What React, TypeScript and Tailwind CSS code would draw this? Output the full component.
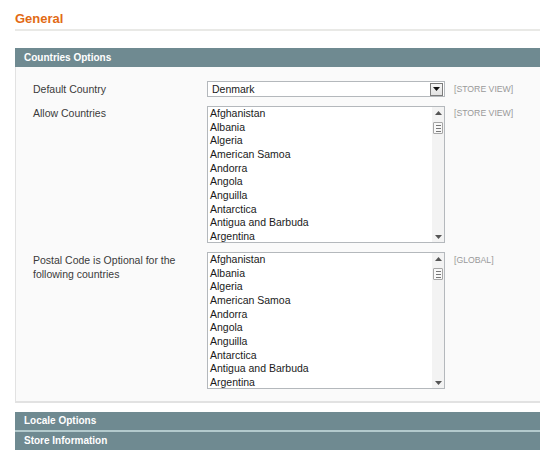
import React from 'react';

const countries = [
  'Afghanistan',
  'Albania',
  'Algeria',
  'American Samoa',
  'Andorra',
  'Angola',
  'Anguilla',
  'Antarctica',
  'Antigua and Barbuda',
  'Argentina',
];

function CountryList() {
  return (
    <div className="flex h-[137px] w-[238px] border border-[#b4b8bc] bg-white">
      <div className="flex-1 overflow-hidden pl-[2px]">
        {countries.map((c) => (
          <div key={c} className="h-[13.67px] text-[10.5px] leading-[13.67px] text-[#1a1a1a] whitespace-nowrap">
            {c}
          </div>
        ))}
      </div>
      {/* Scrollbar */}
      <div className="flex w-[12px] flex-col items-center bg-[#f3f3f3]">
        <div className="flex h-[11px] w-full items-center justify-center">
          <svg width="7" height="4" viewBox="0 0 7 4">
            <path d="M0 4 L3.5 0 L7 4 Z" fill="#555" />
          </svg>
        </div>
        <div className="mt-[4px] flex h-[12px] w-[10px] flex-col items-center justify-center gap-[2px] rounded-[1px] border border-[#a6a6a6] bg-[#f8f8f8]">
          <div className="h-px w-[5px] bg-[#777]" />
          <div className="h-px w-[5px] bg-[#777]" />
          <div className="h-px w-[5px] bg-[#777]" />
        </div>
        <div className="flex-1" />
        <div className="flex h-[11px] w-full items-center justify-center">
          <svg width="7" height="4" viewBox="0 0 7 4">
            <path d="M0 0 L7 0 L3.5 4 Z" fill="#555" />
          </svg>
        </div>
      </div>
    </div>
  );
}

function SectionHeader({ title }: { title: string }) {
  return (
    <div className="h-[18px] bg-[#6f8a91] pl-[9px] text-[10px] font-bold leading-[18px] text-white">
      {title}
    </div>
  );
}

export default function App() {
  return (
    <div className="min-h-[467px] w-[540px] bg-white pl-[15px] pt-[11px] font-['Liberation_Sans',Arial,sans-serif]">
      {/* Page title */}
      <h3 className="border-b-2 border-[#e9e9e6] pb-[2px] text-[13px] font-bold leading-[16px] text-[#e26a14]">
        General
      </h3>

      {/* Countries Options */}
      <div className="mt-[17px]">
        <div className="h-[19px] bg-[#6f8a91] pl-[9px] text-[10px] font-bold leading-[19px] text-white">
          Countries Options
        </div>
        <div className="flex flex-col gap-[9px] border-b-2 border-l border-[#e2e2e2] bg-[#fafafa] pb-[12px] pl-[17px] pt-[14px]">
          {/* Default Country */}
          <div className="flex">
            <div className="w-[174px] text-[10.5px] leading-[16px] text-[#3a3a3a]">Default Country</div>
            <div className="flex h-[16px] w-[238px] items-center border border-[#b4b8bc] bg-white pr-[1px]">
              <span className="flex-1 pl-[4px] text-[10.5px] leading-[14px] text-[#1a1a1a]">Denmark</span>
              <div className="flex h-[13px] w-[13px] items-center justify-center border border-[#7c7c7c] bg-gradient-to-b from-[#f6f6f6] to-[#e2e2e2]">
                <svg width="7" height="4" viewBox="0 0 7 4">
                  <path d="M0 0 L7 0 L3.5 4 Z" fill="#111" />
                </svg>
              </div>
            </div>
            <div className="ml-[9px] text-[8.7px] leading-[16px] text-[#999]">[STORE VIEW]</div>
          </div>

          {/* Allow Countries */}
          <div className="flex">
            <div className="w-[174px] text-[10.5px] leading-[14px] text-[#3a3a3a]">Allow Countries</div>
            <CountryList />
            <div className="ml-[9px] text-[8.7px] leading-[14px] text-[#999]">[STORE VIEW]</div>
          </div>

          {/* Postal code optional */}
          <div className="flex">
            <div className="w-[174px] pt-[1px] text-[10.5px] leading-[14px] text-[#3a3a3a]">
              Postal Code is Optional for the
              <br />
              following countries
            </div>
            <CountryList />
            <div className="ml-[9px] pt-[1px] text-[8.7px] leading-[14px] text-[#999]">[GLOBAL]</div>
          </div>
        </div>
      </div>

      {/* Collapsed sections */}
      <div className="mt-[9px]">
        <SectionHeader title="Locale Options" />
        <div className="h-[2px] bg-[#b3cacd]" />
        <SectionHeader title="Store Information" />
      </div>
    </div>
  );
}
